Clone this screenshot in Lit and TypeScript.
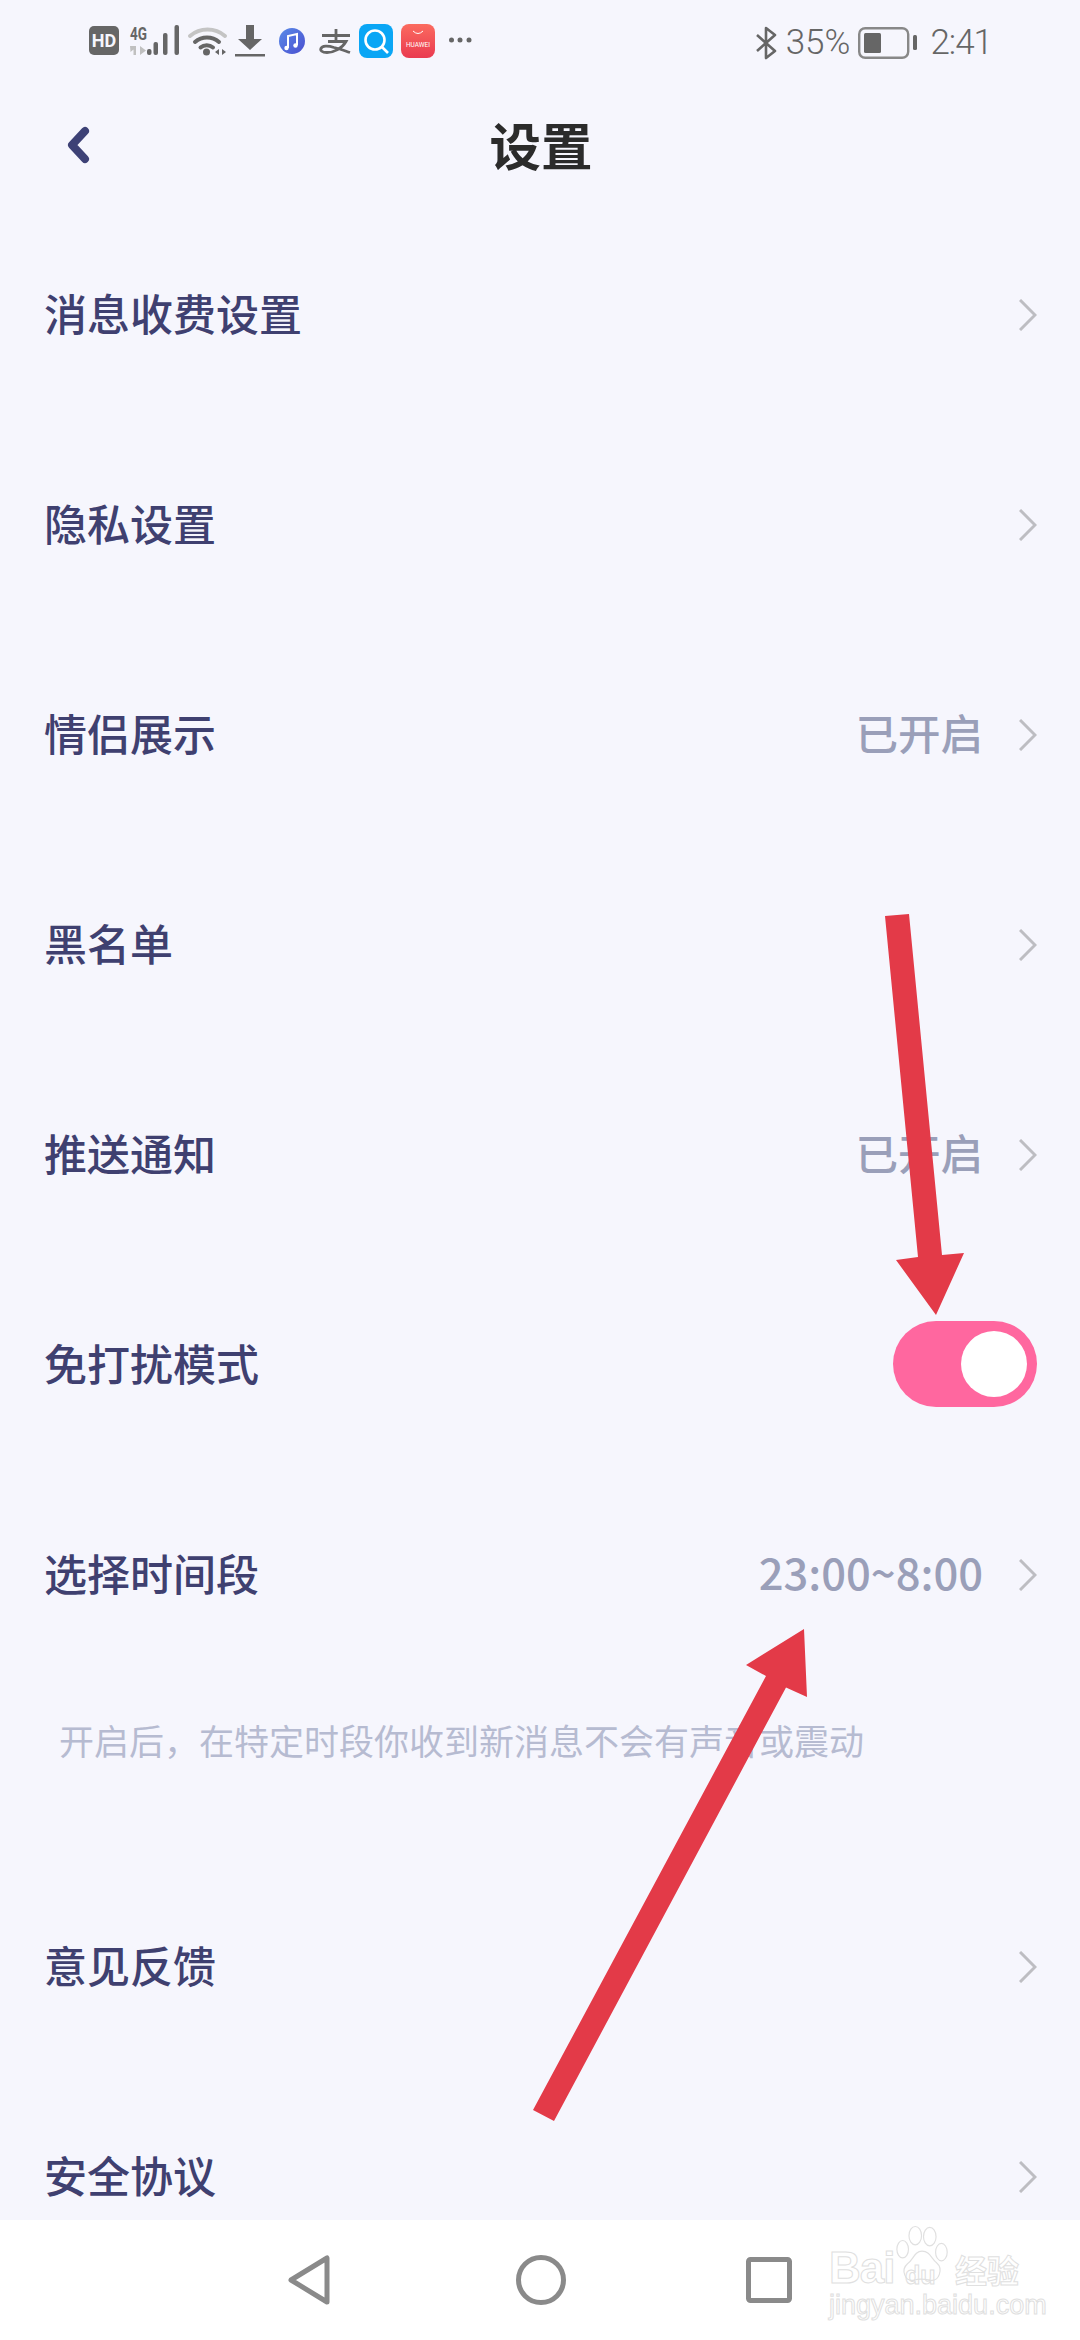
import { LitElement, html, css, svg } from "lit";
import { customElement } from "lit/decorators.js";

const statusIcons: [number, number, any][] = [
  [89, 125, svg`<rect x="89" y="26" width="30" height="29" rx="5" fill="#666"/><text x="104" y="47" text-anchor="middle" font-family="Roboto" font-weight="700" font-size="18" fill="#f6f6fd">HD</text>`],
  [125, 185, svg`<text x="138.5" y="40" text-anchor="middle" font-family="Roboto" font-weight="700" font-size="19" fill="#666" textLength="17" lengthAdjust="spacingAndGlyphs">4G</text>
    <path d="M130 46h6v9h-2.500v-5.500l-3 2.500zM140 55v-9l6 4.500z" fill="#c0c0c0"/>
    <rect x="147" y="49" width="4.500" height="6" rx="2" fill="#666"/><rect x="153.500" y="42" width="4.500" height="13" rx="2" fill="#666"/><rect x="163" y="33" width="4.500" height="22" rx="2" fill="#666"/><rect x="174.500" y="25" width="4.500" height="30" rx="2" fill="#666"/>`],
  [185, 232, svg`<path d="M190 36a27 27 0 0 1 35 0" fill="none" stroke="#c4c4c4" stroke-width="4" stroke-linecap="round"/>
    <path d="M195 42a18 18 0 0 1 24 0M200.500 47.500a9.500 9.500 0 0 1 12.500 0" fill="none" stroke="#666" stroke-width="4" stroke-linecap="round"/>
    <circle cx="206.500" cy="52" r="3.500" fill="#666"/><path d="M219 49v6l-4-3zM222 49v6l4-3z" fill="#666"/>`],
  [232, 272, svg`<path d="M246 25h8v14h8l-12 11-12-11h8z" fill="#666"/><rect x="235" y="54" width="30" height="2.500" fill="#666"/>`],
  [272, 312, svg`<defs><linearGradient id="m" x1="0" y1="0" x2="1" y2="1"><stop offset="0" stop-color="#5a8be8"/><stop offset="1" stop-color="#4a4fd0"/></linearGradient></defs>
    <circle cx="292" cy="41" r="13" fill="url(#m)"/><path d="M288 48v-12l9-2v11" fill="none" stroke="#fff" stroke-width="2"/><circle cx="286.500" cy="48" r="2.200" fill="#fff"/><circle cx="295.500" cy="45.500" r="2.200" fill="#fff"/>`],
  [312, 355, svg`<path d="M322 35.500h28M336 29v11M328 41.500h18c-4 7-12 11-19 11-5 0-7-2-6-4 1-3 7-3 13-1 5 1 10 3 16 5" fill="none" stroke="#666" stroke-width="2.800"/>`],
  [355, 397, svg`<rect x="359" y="24" width="34" height="34" rx="8" fill="#0aa6f5"/><circle cx="375" cy="40" r="9.500" fill="none" stroke="#fff" stroke-width="2.600"/><path d="M382 47l6 6" stroke="#fff" stroke-width="2.600"/>`],
  [397, 442, svg`<defs><linearGradient id="h" x1="0" y1="0" x2="0" y2="1"><stop offset="0" stop-color="#fb6b5f"/><stop offset="1" stop-color="#ea3a50"/></linearGradient></defs>
    <rect x="401" y="24" width="34" height="34" rx="8" fill="url(#h)"/><path d="M413 31q5 5 10 0" fill="none" stroke="#fff" stroke-width="1"/><text x="418" y="47" text-anchor="middle" font-family="Roboto" font-size="6.500" fill="#fff">HUAWEI</text>`],
  [442, 474, svg`<circle cx="451.500" cy="40" r="2.500" fill="#666"/><circle cx="460" cy="40" r="2.500" fill="#666"/><circle cx="469" cy="40" r="2.500" fill="#666"/>`],
];

const chevron = html`<svg class="chev" viewBox="0 0 18 32"><path d="M1 1l15 15L1 31" fill="none" stroke="#bdbdc2" stroke-width="3"/></svg>`;

type Row = { label: string; value?: string; toggle?: boolean; big?: boolean };
const rowsA: Row[] = [
  { label: "消息收费设置" },
  { label: "隐私设置" },
  { label: "情侣展示", value: "已开启" },
  { label: "黑名单" },
  { label: "推送通知", value: "已开启" },
  { label: "免打扰模式", toggle: true },
  { label: "选择时间段", value: "23:00~8:00", big: true },
];
const rowsB: Row[] = [{ label: "意见反馈" }, { label: "安全协议" }];

@customElement("app-root")
export class AppRoot extends LitElement {
  static styles = css`
    :host {
      display: block;
      position: relative;
      width: 1080px;
      height: 2340px;
      overflow: hidden;
      background: #f6f6fd;
      font-family: "Noto Sans CJK SC", "Liberation Sans", sans-serif;
    }
    .page { display: flex; flex-direction: column; height: 2340px; }
    .status { display: flex; align-items: flex-start; height: 80px; padding: 22px 88px 0 89px; box-sizing: border-box; flex: none; }
    .status svg { display: block; height: 40px; flex: none; }
    .right { margin-left: auto; display: flex; align-items: center; height: 40px; margin-top: 1px; color: #666; font: 300 35px/40px Roboto, sans-serif; }
    .right .bt { margin-right: 9px; }
    .right .bat { margin: 0 13px 0 8px; }
    .right .time { letter-spacing: -1px; }
    .header { flex: none; height: 130px; display: grid; grid-template-columns: 1fr auto 1fr; align-items: center; padding-left: 66px; padding-right: 64px; box-sizing: border-box; }
    .header svg { display: block; width: 24px; height: 38px; }
    .title { font-size: 51.500px; line-height: 60px; font-weight: 700; color: #2b2b2b; margin-bottom: 2px; }
    .main { flex: 1; min-height: 0; overflow: hidden; }
    .row { display: flex; align-items: center; height: 210px; padding: 0 43px 0 44px; box-sizing: border-box; }
    .label { flex: 1; font-size: 43px; line-height: 60px; font-weight: 500; color: #3f4070; padding-bottom: 6px; }
    .value { font-size: 42.500px; line-height: 60px; font-weight: 500; color: #9a9fb9; margin-right: 36px; padding-bottom: 6px; }
    .value.big { font-size: 43.500px; }
    .chev { display: block; width: 18px; height: 32px; flex: none; }
    .toggle { width: 144px; height: 86px; margin-bottom: 2px; border-radius: 43px; background: #ff679f; display: flex; align-items: center; justify-content: flex-end; padding-right: 10px; box-sizing: border-box; }
    .knob { width: 66px; height: 66px; border-radius: 50%; background: #fff; }
    .note { height: 182px; padding: 35px 0 0 59px; box-sizing: border-box; font-size: 35px; line-height: 50px; color: #b6bbd1; }
    .nav { flex: none; height: 120px; background: #fff; position: relative; display: flex; align-items: center; }
    .nav .btns { display: flex; align-items: center; height: 100%; padding: 0 0 0 288px; box-sizing: border-box; }
    .nav .btns svg { display: block; }
    .nav .tri { width: 42px; height: 50px; margin-right: 186px; }
    .nav .cir { width: 50px; height: 50px; margin-right: 180px; }
    .nav .sq { width: 46px; height: 46px; }
    .mark { position: absolute; left: 829px; top: 5px; width: 196px; height: 96px; color: transparent; -webkit-text-stroke: 1px #e0e0e0; font-family: "Liberation Sans", sans-serif; }
    .mark span { position: absolute; white-space: nowrap; }
    .mark .bd { left: 0; top: 25px; font-size: 44px; line-height: 36px; font-weight: 700; letter-spacing: -1px; }
    .mark .du { left: 76px; top: 38px; font-size: 25px; line-height: 24px; font-weight: 700; }
    .mark .jy { left: 126px; top: 26px; font-family: "Noto Sans CJK SC", sans-serif; font-size: 32px; line-height: 36px; font-weight: 700; }
    .mark .url { left: 0; top: 68px; font-size: 27px; line-height: 24px; }
    .mark svg { position: absolute; left: 64px; top: 0; width: 60px; height: 62px; }
    .arrows { position: absolute; left: 0; top: 0; width: 1080px; height: 2340px; pointer-events: none; }
  `;

  private renderRow(r: Row) {
    return html`<div class="row">
      <span class="label">${r.label}</span>
      ${r.value ? html`<span class="value ${r.big ? "big" : ""}">${r.value}</span>` : ""}
      ${r.toggle ? html`<div class="toggle"><div class="knob"></div></div>` : chevron}
    </div>`;
  }

  render() {
    return html`<div class="page">
        <div class="status">
          ${statusIcons.map(
            ([a, b, c]) => html`<svg style="width:${b - a}px" viewBox="${a} 22 ${b - a} 40">${c}</svg>`
          )}
          <div class="right">
            <svg class="bt" style="width:21px;height:34px" viewBox="0 0 21 34"><path d="M1 9l18 16-9 7V2l9 7L1 25" fill="none" stroke="#666" stroke-width="2.600" stroke-linejoin="round"/></svg>
            <span>35%</span>
            <svg class="bat" style="width:59px;height:32px" viewBox="0 0 59 32"><rect x="1.200" y="1.200" width="49" height="29.600" rx="6" fill="none" stroke="#888" stroke-width="2.400"/><rect x="6" y="6" width="17" height="20" rx="1.500" fill="#666"/><rect x="55" y="8" width="4" height="15" rx="1.500" fill="#666"/></svg>
            <span class="time">2:41</span>
          </div>
        </div>
        <div class="header">
          <svg viewBox="0 0 24 38"><path d="M19 5L6 19l13 14" fill="none" stroke="#3d4176" stroke-width="8" stroke-linecap="round" stroke-linejoin="round"/></svg>
          <div class="title">设置</div>
        </div>
        <div class="main">
          ${rowsA.map((r) => this.renderRow(r))}
          <div class="note">开启后，在特定时段你收到新消息不会有声音或震动</div>
          ${rowsB.map((r) => this.renderRow(r))}
        </div>
        <div class="nav">
          <div class="btns">
            <svg class="tri" viewBox="0 0 42 50"><path d="M39 3v44L3 25z" fill="none" stroke="#8a8a8a" stroke-width="5" stroke-linejoin="round"/></svg>
            <svg class="cir" viewBox="0 0 50 50"><circle cx="25" cy="25" r="22.500" fill="none" stroke="#8a8a8a" stroke-width="5"/></svg>
            <svg class="sq" viewBox="0 0 46 46"><rect x="2.500" y="2.500" width="41" height="41" rx="2" fill="none" stroke="#8a8a8a" stroke-width="5"/></svg>
          </div>
          <div class="mark">
            <svg viewBox="0 0 62 62" fill="#fff" stroke="#e0e0e0" stroke-width="1.200">
              <ellipse cx="10" cy="24" rx="6" ry="9"/><ellipse cx="23" cy="10" rx="6.500" ry="9.500"/><ellipse cx="38" cy="11" rx="6.500" ry="9.500"/><ellipse cx="50" cy="27" rx="6" ry="9"/>
              <path d="M30 26c8 0 10 8 15 12 7 6 3 20-7 18-5-1-11-2-16 0-10 2-14-11-7-17 6-4 7-13 15-13z"/>
            </svg>
            <span class="bd">Bai</span>
            <span class="du">du</span>
            <span class="jy">经验</span>
            <span class="url">jingyan.baidu.com</span>
          </div>
        </div>
      </div>
      <svg class="arrows" viewBox="0 0 1080 2340">
        <path d="M885 916L909 914L942 1255L964 1253L936 1315L896 1260L918 1257Z" fill="#e33a48"/>
        <path d="M804 1629L807 1697L786 1687.500L554 2121L533 2110L766 1676L746 1665Z" fill="#e33a48"/>
      </svg>`;
  }
}
